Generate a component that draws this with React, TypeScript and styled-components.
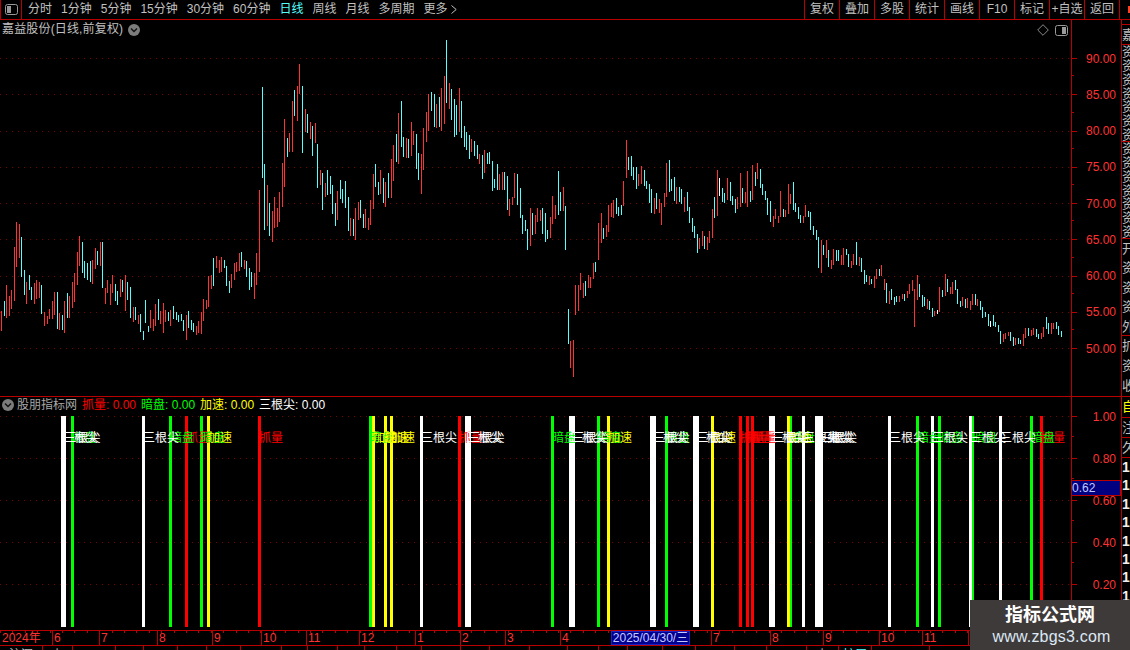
import React from 'react';
import styled, { createGlobalStyle } from 'styled-components';

const RED_LINE = '#b80000';
const RED_TEXT = '#ff3232';
const GRAY = '#c0c0c0';
const CJK = '"Liberation Sans", "Noto Sans CJK SC", sans-serif';

const Global = createGlobalStyle`
  html, body { margin: 0; padding: 0; background: #000; }
  body { font-family: ${CJK}; font-size: 12px; }
`;

const Page = styled.div`
  width: 1130px;
  height: 650px;
  overflow: hidden;
  background: #000;
  display: flex;
  flex-direction: column;
  position: relative;
  color: ${GRAY};
`;

/* ---------- toolbar ---------- */
const Toolbar = styled.div`
  height: 19px;
  flex: none;
  display: flex;
  align-items: stretch;
  border-bottom: 1px solid ${RED_LINE};
`;
const PanelCell = styled.div`
  width: 22px;
  flex: none;
  border-left: 1px solid ${RED_LINE};
  border-right: 1px solid ${RED_LINE};
  display: flex;
  align-items: center;
  padding-left: 4px;
  box-sizing: border-box;
`;
const PeriodList = styled.div`
  display: flex;
  align-items: center;
  gap: 9px;
  padding-left: 6px;
  flex: 1;
`;
const Period = styled.span<{ $active?: boolean }>`
  color: ${(p) => (p.$active ? '#54ffff' : GRAY)};
  font-size: 12px;
  line-height: 19px;
  white-space: nowrap;
  display: flex;
  align-items: center;
  gap: 3px;
`;
const Tool = styled.span`
  width: 35px;
  flex: none;
  box-sizing: border-box;
  border-left: 1px solid ${RED_LINE};
  text-align: center;
  line-height: 19px;
  font-size: 12px;
  color: ${GRAY};
  white-space: nowrap;
`;
const ToolEnd = styled.div`
  width: 10px;
  flex: none;
  border-left: 1px solid ${RED_LINE};
  display: flex;
  justify-content: flex-end;
  align-items: center;
`;
const RedChip = styled.i`
  display: block;
  width: 2px;
  height: 7px;
  background: #ff4020;
`;

/* ---------- main ---------- */
const MainRow = styled.div`
  display: flex;
  height: 610px;
  flex: none;
`;
const ChartColumn = styled.div`
  width: 1121px;
  flex: none;
  display: flex;
  flex-direction: column;
`;
const PriceRow = styled.div`
  height: 376px;
  flex: none;
  display: flex;
  border-bottom: 1px solid ${RED_LINE};
`;
const IndicatorRow = styled.div`
  height: 233px;
  flex: none;
  display: flex;
`;
const Pane = styled.div`
  width: 1071px;
  flex: none;
  position: relative;
`;
const ChartSvg = styled.svg`
  display: block;
`;
const PaneTitle = styled.div`
  position: absolute;
  left: 2px;
  top: 2px;
  display: flex;
  align-items: center;
  gap: 5px;
  font-size: 12px;
  letter-spacing: 0.16px;
  line-height: 15px;
  color: ${GRAY};
`;
const PaneActions = styled.div`
  position: absolute;
  right: 3px;
  top: 4px;
  display: flex;
  align-items: center;
  gap: 6px;
`;
const Legend = styled.div`
  position: absolute;
  left: 2px;
  top: 0;
  display: flex;
  align-items: center;
  height: 15px;
`;
const LegendName = styled.span`
  color: #a8a8a8;
  margin: 1px 5px 0 3px;
  line-height: 15px;
  white-space: nowrap;
`;
const LegendValue = styled.span<{ $color: string }>`
  color: ${(p) => p.$color};
  margin: 1px 5px 0 0;
  line-height: 15px;
  white-space: pre;
`;

const AxisColumn = styled.div<{ $pad: number }>`
  width: 50px;
  flex: none;
  box-sizing: border-box;
  border-left: 1px solid ${RED_LINE};
  padding-top: ${(p) => p.$pad}px;
  position: relative;
`;
const AxisRowBox = styled.div<{ $h: number; $extra?: boolean }>`
  height: ${(p) => p.$h}px;
  display: flex;
  align-items: center;
  justify-content: flex-end;
  padding: 1px 5px 0 0;
  box-sizing: border-box;
  color: ${RED_TEXT};
  font-size: 12px;
  position: relative;
  &::before {
    content: '';
    position: absolute;
    left: 0;
    top: 50%;
    width: 5px;
    height: 1px;
    background: ${RED_LINE};
  }
  &::after {
    content: '';
    position: absolute;
    left: 0;
    bottom: 0;
    width: 2px;
    height: 1px;
    background: ${RED_LINE};
  }
  &:last-child::after {
    display: ${(p) => (p.$extra ? 'block' : 'none')};
  }
`;
const IndicatorAxis = styled(AxisColumn)`
  margin-top: 0;
  & > :first-child { margin-top: -2px; }
`;
const ValueBadge = styled.div`
  position: absolute;
  left: 0;
  top: 83px;
  width: 49px;
  height: 16px;
  box-sizing: border-box;
  background: #000080;
  border: 1px solid ${RED_LINE};
  border-left: 0;
  color: #c4c8ff;
  font-size: 12px;
  line-height: 14px;
`;

/* ---------- sidebar ---------- */
const Sidebar = styled.div`
  width: 9px;
  flex: none;
  box-sizing: border-box;
  border-left: 1px solid ${RED_LINE};
  overflow: hidden;
  display: flex;
  flex-direction: column;
`;
const SideGroup = styled.div<{ $h: number }>`
  height: ${(p) => p.$h}px;
  flex: none;
  box-sizing: border-box;
  border-bottom: 1px solid ${RED_LINE};
  overflow: hidden;
`;
const SideChar = styled.div<{ $color?: string; $h: number }>`
  width: 14px;
  height: ${(p) => p.$h}px;
  line-height: ${(p) => p.$h}px;
  font-size: 13px;
  color: ${(p) => p.$color ?? GRAY};
`;
const SideNum = styled.div`
  height: 18.4px;
  line-height: 18.4px;
  font-size: 14px;
  font-weight: 700;
  color: #f0f0f0;
`;

/* ---------- x axis ---------- */
const XAxis = styled.div`
  height: 16px;
  flex: none;
  box-sizing: border-box;
  display: flex;
  border-top: 1px solid ${RED_LINE};
  border-bottom: 1px solid ${RED_LINE};
  position: relative;
  background-image: repeating-linear-gradient(to right, ${RED_LINE} 0 1px, transparent 1px 12.4px);
  background-size: 100% 2px;
  background-repeat: no-repeat;
`;
const Month = styled.div<{ $w: number; $first?: boolean }>`
  width: ${(p) => p.$w}px;
  flex: none;
  box-sizing: border-box;
  border-left: ${(p) => (p.$first ? '0' : `1px solid ${RED_LINE}`)};
  padding-left: ${(p) => (p.$first ? 2 : 1)}px;
  color: ${RED_TEXT};
  font-size: 12px;
  line-height: 15px;
  white-space: nowrap;
  overflow: hidden;
`;
const DateBadge = styled.div`
  position: absolute;
  left: 611px;
  top: 0;
  width: 79px;
  height: 14px;
  box-sizing: border-box;
  border: 1px solid #2020c0;
  background: #000090;
  color: #c4c8ff;
  font-size: 12px;
  line-height: 13px;
  text-align: center;
  white-space: nowrap;
`;

/* ---------- bottom tabs ---------- */
const Tabs = styled.div`
  height: 4px;
  flex: none;
  display: flex;
  overflow: hidden;
`;
const Tab = styled.div<{ $w: number; $color?: string }>`
  width: ${(p) => p.$w}px;
  flex: none;
  box-sizing: border-box;
  border-right: 1px solid ${RED_LINE};
  color: ${(p) => p.$color ?? GRAY};
  font-size: 12px;
  line-height: 18px;
  text-align: center;
  overflow: hidden;
  white-space: nowrap;
`;

/* ---------- watermark ---------- */
const Watermark = styled.div`
  position: absolute;
  right: 0;
  bottom: 0;
  width: 160px;
  height: 50px;
  background: #3f3a3a;
  display: flex;
  flex-direction: column;
  align-items: center;
  padding-top: 4px;
  box-sizing: border-box;
`;
const WatermarkTitle = styled.div`
  color: #fff;
  font: 700 18px/23px ${CJK};
`;
const WatermarkUrl = styled.div`
  color: #dce8f4;
  font: 400 16px/19px ${CJK};
  letter-spacing: 0.2px;
  margin-left: 3px;
`;

const SignalText = styled.text<{ $color: string }>`
  fill: ${(p) => p.$color};
  font-family: ${CJK};
  font-size: 12px;
`;

/* ---------- data ---------- */
const seg1 =
  'r4,333,392 c13,303,348 r19,255,353 r28,288,347 r34,270,327 r43,141,302 r49,66,200 r58,72,173 c64,111,230 c73,210,285 r79,246,312 c88,225,270 c94,262,300 r103,250,312 r109,240,297 r118,246,294 c124,255,342 r133,336,378 r142,348,372 r148,327,357 r157,303,357 r163,276,345 c172,276,387 r178,339,390 c187,345,390 r193,303,399 c202,279,354 r208,288,353 r217,246,324 r223,219,306 r232,156,255 r238,108,198 c247,126,219 c253,183,234 c262,189,240 c271,183,246 r277,180,252 r286,144,207 c292,153,195 r301,126,198 c307,126,264 r316,264,312 r322,240,279 r331,252,315 r337,225,279 c346,252,303 c352,273,315 r361,237,291 c367,240,276 r376,225,333 c382,246,300 c391,261,354 r400,321,366 c406,321,360 r415,345,372 c421,342,396 c430,393,420 c436,300,369 c445,378,396 r451,330,384 r460,357,393 r466,312,378 c475,297,360 r481,333,372 r490,309,399 r496,330,366 c505,336,363 r511,330,378 c520,318,357 c529,336,360 c535,345,366 c544,342,363 c550,360,393 r559,345,420 c565,333,384 c574,360,390 c580,369,396 r589,378,405 r595,363,399 r604,336,402 r610,297,363 r619,300,327 r625,228,321 r634,225,267 c640,174,258 r649,168,204 r658,180,219 r664,171,216 c673,180,204 c679,198,258 c688,243,279 r694,222,264 r703,189,240 r709,186,216 r718,159,213 c724,156,201 r733,180,207 c739,183,231 c748,204,270 c754,216,261 r763,219,297 r769,159,255';
const seg2 =
  'r28,465,710 c37,156,428 c43,387,585 r52,450,572 c58,504,602 r67,528,620 r73,486,578 r82,519,575 r88,471,560 r97,384,515 r103,252,455 c112,309,365 r118,294,350 r127,198,350 c133,166,242 r142,153,257 r148,87,176 c157,153,353 r166,222,290 c172,237,294 r181,261,311 c187,273,362 r196,264,323 c202,327,458 r211,405,449 c217,414,524 r226,444,485 c232,405,479 c241,423,476 c247,450,536 c256,504,572 r262,468,555 c271,435,491 c277,462,503 c286,438,518 c295,486,587 r301,549,602 c310,552,602 r316,519,614 r325,501,554 c331,495,548 c340,537,578 r346,522,578 r355,549,584 r361,495,569 r370,417,521 c376,387,455 c385,441,479 r391,405,478 c400,429,503 r406,441,515 c415,414,488 r424,372,488 r430,330,437 c439,297,380 r445,234,387 c454,198,335 c460,306,365 r469,309,369 c475,312,369 r484,261,362 r490,288,329 c499,297,401 c505,354,434 r514,357,476 r520,279,404 r529,231,320 r535,177,287 c544,171,227 c553,177,275 r559,207,278 c568,186,276 r574,159,289 r583,123,266 c589,15,203 r598,144,221 c604,162,254 c613,192,305 c619,210,299 r628,159,290 c634,198,308 c643,273,335 c649,291,344 c658,300,371 r664,312,350 c673,318,363 c682,330,371 r688,357,387 c697,360,431 r703,345,413 c712,354,386 c718,351,386 c727,378,467 c733,432,459 c742,387,464 r748,417,464 r757,411,464 c763,411,464 c772,423,525 r778,492,542 r787,486,510 r793,414,489 c802,417,509 c811,459,548 c817,540,596 c826,555,588 c832,582,644 r841,519,632 c847,534,600 r856,540,597 r862,519,560 r871,525,557 c877,519,597 c886,534,620 c892,585,612 r901,546,609 r907,483,567 r916,510,552 c925,408,539 c931,471,528 r940,456,527 c946,513,644 c955,822,926 r961,918,999 r970,915,1026 r976,750,840 r985,750,827 r991,714,765 r1000,744,789 c1006,738,783 r1015,720,759 r1021,726,759 r1030,684,732 c1036,681,711 r1045,564,675 r1054,534,624 c1060,579,612 r1069,570,606 r1075,510,591 r1084,504,546 r1090,495,549 c1099,489,537 c1105,516,543 c1114,510,540 r1120,438,513 r1129,315,429 c1135,366,405 c1144,363,423 c1150,396,435 c1159,396,462 r1165,417,453 r1174,393,447 c1183,405,453 c1189,438,462 c1198,447,504';
const seg3 =
  'c4,177,249 r13,204,252 c19,189,237 r28,207,249 r34,219,285 r43,189,231 r49,99,201 c58,90,186 c64,147,183 c73,141,213 r79,171,222 c88,171,216 c94,177,222 r103,201,246 c112,186,243 c118,231,279 c127,264,306 c133,288,324 c142,312,369 r148,324,357 r157,303,348 c163,318,357 r172,321,360 r178,303,339 r187,237,324 c193,201,264 r202,120,258 w208,144,198 c217,174,216 c223,189,219 r232,144,210 c241,156,213 c247,198,225 c256,207,249 r262,201,237 r271,129,231 c277,174,219 r286,186,219 r292,123,231 c301,183,216 r307,105,210 c316,126,168 r322,99,147 c331,117,174 c337,162,195 c346,183,210 c352,204,255 c361,213,276 r370,258,291 r376,237,267 r385,258,279 r391,183,261 c400,237,261 r406,240,261 r415,162,252 r421,192,222 c430,156,240 c436,219,246 c445,231,267 c451,255,279 r460,258,279 r466,225,261 c475,243,261 c481,246,300 c490,288,315 c499,300,330 c505,321,414 r514,330,429 c520,345,375 r529,330,384 c535,360,411 r544,390,417 r550,357,405 c559,360,393 c565,360,393 r574,375,405 r580,354,405 c589,357,375 c595,372,411 r604,393,414 r610,372,405 c619,336,405 r628,381,408 c634,384,426 c643,420,462 c649,435,456 r658,438,465 c664,447,462 r673,438,474 r679,417,447 c688,417,438 r694,405,438 r703,447,480 c709,459,519 r718,483,522 c724,477,510 c733,501,525 c739,498,516 r748,498,516 r757,492,507 c763,492,513 r772,483,504 r778,462,492 r787,450,483 r793,477,591 r802,435,510 c808,462,501 c817,495,531 c823,501,528 r832,507,537 c838,513,540 c847,534,561 r853,543,558 w862,540,552 r868,471,546 c877,480,501 r886,432,498 c892,447,486 r901,471,492 r907,456,492 c916,450,480 c922,477,522 c931,513,531 r937,501,528 c946,507,534 r952,504,534 r961,513,540 r967,492,525 c976,492,525 r982,507,528 c991,513,540 c997,531,564 c1006,546,561 c1015,552,588 w1021,573,591 c1030,555,588 c1036,576,591 c1045,585,606 c1051,603,642 r1060,612,636 r1066,609,627 r1075,606,618 c1081,606,633 c1090,621,648 r1096,624,645 c1105,624,642 c1111,630,642 r1120,612,648 r1126,594,624 c1135,594,618 r1144,600,618 r1150,594,615 c1159,597,621 c1165,612,627 r1174,609,627 r1180,591,621 c1189,561,597 c1195,579,612 r1204,579,612 r1210,579,597 c1219,576,597 c1225,588,615 c1234,603,621';

const CANDLE_COLOR: Record<string, string> = { r: '#ff3232', c: '#54ffff', w: '#ffffff' };

type Candle = { x: number; y: number; h: number; fill: string };
const parse = (s: string, x0: number, y0: number): Candle[] =>
  s.split(' ').map((e) => {
    const [a, t, b] = e.slice(1).split(',').map(Number);
    const top = Math.round(y0 + t / 3);
    return { x: Math.floor(x0 + a / 3), y: top, h: Math.round(y0 + b / 3) - top, fill: CANDLE_COLOR[e[0]] };
  });

// coordinates are relative to the price pane, which starts at y = 20
const candles = [...parse(seg1, 0, 180), ...parse(seg2, 250, 15), ...parse(seg3, 650, 110)];

const priceGrid = [38, 74, 111, 147, 183, 219, 256, 292, 328];
const indicatorGrid = [19, 61, 103, 145, 187];
const dots = Array.from({ length: 179 }, (_, i) => i * 6);

type Kind = 'r' | 'g' | 'y' | 'w';
const SIGNAL: Record<Kind, { color: string; label: string; order: number }> = {
  r: { color: '#ff0000', label: '抓量', order: 0 },
  g: { color: '#00ff00', label: '暗盘', order: 1 },
  y: { color: '#ffff00', label: '加速', order: 2 },
  w: { color: '#ffffff', label: '三根尖', order: 3 },
};
const bars: [Kind, number, number][] = [
  ['w', 61, 5], ['g', 71, 3], ['w', 142, 3], ['g', 169, 3], ['r', 185, 3], ['g', 200, 3], ['y', 207, 3],
  ['r', 258, 3], ['g', 369, 3], ['y', 372, 3], ['y', 384, 3], ['y', 390, 3], ['w', 420, 3], ['r', 458, 3],
  ['w', 465, 6], ['g', 551, 3], ['w', 569, 6], ['g', 597, 3], ['y', 607, 3], ['w', 650, 6], ['g', 665, 3],
  ['w', 693, 6], ['y', 711, 3], ['r', 739, 3], ['r', 746, 3], ['r', 751, 3], ['w', 769, 6], ['y', 787, 3],
  ['g', 790, 2], ['w', 802, 3], ['w', 815, 8], ['w', 888, 3], ['g', 916, 3], ['w', 931, 3], ['g', 938, 3],
  ['w', 969, 3], ['g', 972, 2], ['w', 999, 3], ['g', 1030, 3], ['r', 1040, 3],
];
const labels = bars
  .flatMap(([k, x, w]) => {
    const n = w <= 3 ? 1 : Math.round((w - 3) / 2.5) + 1;
    return Array.from({ length: n }, (_, i) => ({ k, x: x + 1 + i * 2.5 }));
  })
  .sort((a, b) => SIGNAL[a.k].order - SIGNAL[b.k].order);

const periods = ['分时', '1分钟', '5分钟', '15分钟', '30分钟', '60分钟', '日线', '周线', '月线', '多周期'];
const tools = ['复权', '叠加', '多股', '统计', '画线', 'F10', '标记', '+自选', '返回'];
const prices = ['90.00', '85.00', '80.00', '75.00', '70.00', '65.00', '60.00', '55.00', '50.00'];
const ratios = ['1.00', '0.80', '0.60', '0.40', '0.20'];
const months: [number, string][] = [
  [0, '2024年'], [52, '6'], [99, '7'], [157, '8'], [212, '9'], [261, '10'], [306, '11'], [359, '12'],
  [415, '1'], [460, '2'], [505, '3'], [560, '4'], [611, '5'], [662, '6'], [711, '7'], [770, '8'],
  [823, '9'], [879, '10'], [922, '11'], [968, '12'], [1130, ''],
];
const tabEdges = [43, 73, 116, 144, 178, 207, 241, 282, 308, 338, 365, 397, 422, 461, 490, 530, 568, 599, 628, 663, 696, 735, 767, 807, 839, 872, 930, 1130];
const tabNames: Record<number, string> = { 0: '沪深', 1: '上', 24: '上', 25: '扩展' };

const sideGroups: [number, string, number][] = [
  [20, '嘉', 19],
  [97, '资资资资资资资', 13.86],
  [97, '资资资资资资资', 13.86],
  [97, '开资资资外', 19.4],
  [61, '扩资收', 20],
];

const PanelIcon = ({ right }: { right?: boolean }) => (
  <svg width="13" height="11" viewBox="0 0 13 11">
    <rect x="0.5" y="0.5" width="12" height="10" rx="2" fill="none" stroke="#9a9a9a" />
    <rect x={right ? 7 : 2} y="2" width="4" height="7" fill="#9a9a9a" />
  </svg>
);
const Chevron = () => (
  <svg width="12" height="12" viewBox="0 0 12 12">
    <circle cx="6" cy="6" r="6" fill="#7c7c7c" />
    <path d="M3 4.6 6 7.6 9 4.6" fill="none" stroke="#111" strokeWidth="1.4" />
  </svg>
);
const Diamond = () => (
  <svg width="12" height="12" viewBox="0 0 12 12">
    <path d="M6 .7 11.3 6 6 11.3.7 6Z" fill="none" stroke="#8a8a8a" />
  </svg>
);
const MoreArrow = () => (
  <svg width="6" height="9" viewBox="0 0 6 9">
    <path d="M.5.5 5.2 4.5.5 8.5" fill="none" stroke={GRAY} />
  </svg>
);

const DottedGrid = ({ rows }: { rows: number[] }) => (
  <g fill="#7a0000">
    {rows.flatMap((y) => dots.map((x) => <rect key={`${y}-${x}`} x={x} y={y} width="1" height="1" />))}
  </g>
);

export default function App() {
  return (
    <Page>
      <Global />
      <Toolbar>
        <PanelCell>
          <PanelIcon />
        </PanelCell>
        <PeriodList>
          {periods.map((p) => (
            <Period key={p} $active={p === '日线'}>
              {p}
            </Period>
          ))}
          <Period>
            更多
            <MoreArrow />
          </Period>
        </PeriodList>
        {tools.map((t) => (
          <Tool key={t}>{t}</Tool>
        ))}
        <ToolEnd>
          <RedChip />
        </ToolEnd>
      </Toolbar>

      <MainRow>
        <ChartColumn>
          <PriceRow>
            <Pane>
              <ChartSvg width="1071" height="376" shapeRendering="crispEdges">
                <DottedGrid rows={priceGrid} />
                {candles.map((c, i) => (
                  <rect key={i} x={c.x} y={c.y} width="1" height={c.h} fill={c.fill} />
                ))}
              </ChartSvg>
              <PaneTitle>
                <span>嘉益股份(日线,前复权)</span>
                <Chevron />
              </PaneTitle>
              <PaneActions>
                <Diamond />
                <PanelIcon right />
              </PaneActions>
            </Pane>
            <AxisColumn $pad={20}>
              {prices.map((p) => (
                <AxisRowBox key={p} $h={36.25}>
                  {p}
                </AxisRowBox>
              ))}
            </AxisColumn>
          </PriceRow>
          <IndicatorRow>
            <Pane>
              <ChartSvg width="1071" height="233" shapeRendering="crispEdges">
                <DottedGrid rows={indicatorGrid} />
                {bars.map(([k, x, w]) => (
                  <rect key={`${k}${x}`} x={x} y="19" width={w} height="211" fill={SIGNAL[k].color} />
                ))}
                {labels.map((l, i) => (
                  <SignalText key={i} x={l.x} y="45" $color={SIGNAL[l.k].color}>
                    {SIGNAL[l.k].label}
                  </SignalText>
                ))}
              </ChartSvg>
              <Legend>
                <Chevron />
                <LegendName>股朋指标网</LegendName>
                <LegendValue $color="#ff0000">抓量: 0.00</LegendValue>
                <LegendValue $color="#00ff00">暗盘: 0.00</LegendValue>
                <LegendValue $color="#ffff00">加速: 0.00</LegendValue>
                <LegendValue $color="#ffffff">三根尖: 0.00</LegendValue>
              </Legend>
            </Pane>
            <IndicatorAxis $pad={0}>
              {ratios.map((r) => (
                <AxisRowBox key={r} $h={42} $extra>
                  {r}
                </AxisRowBox>
              ))}
              <ValueBadge>0.62</ValueBadge>
            </IndicatorAxis>
          </IndicatorRow>
        </ChartColumn>
        <Sidebar>
          <SideGroup $h={5} />
          {sideGroups.map(([h, chars, step], i) => (
            <SideGroup key={i} $h={h}>
              {[...chars].map((c, j) => (
                <SideChar key={j} $h={step}>
                  {c}
                </SideChar>
              ))}
            </SideGroup>
          ))}
          <SideGroup $h={21}>
            <SideChar $h={19} $color="#ffff00">
              自
            </SideChar>
          </SideGroup>
          <SideGroup $h={20}>
            <SideChar $h={19}>注</SideChar>
          </SideGroup>
          <SideGroup $h={20}>
            <SideChar $h={19}>久</SideChar>
          </SideGroup>
          {Array.from({ length: 9 }, (_, i) => (
            <SideNum key={i}>1</SideNum>
          ))}
        </Sidebar>
      </MainRow>

      <XAxis>
        {months.slice(0, -1).map(([x, m], i) => (
          <Month key={i} $first={i === 0} $w={months[i + 1][0] - x}>
            {m}
          </Month>
        ))}
        <DateBadge>2025/04/30/三</DateBadge>
      </XAxis>

      <Tabs>
        {tabEdges.map((e, i) => (
          <Tab key={e} $w={e - (i ? tabEdges[i - 1] : 0)} $color={i === 25 ? '#54ffff' : GRAY}>
            {tabNames[i] ?? ''}
          </Tab>
        ))}
      </Tabs>

      <Watermark>
        <WatermarkTitle>指标公式网</WatermarkTitle>
        <WatermarkUrl>www.zbgs3.com</WatermarkUrl>
      </Watermark>
    </Page>
  );
}
